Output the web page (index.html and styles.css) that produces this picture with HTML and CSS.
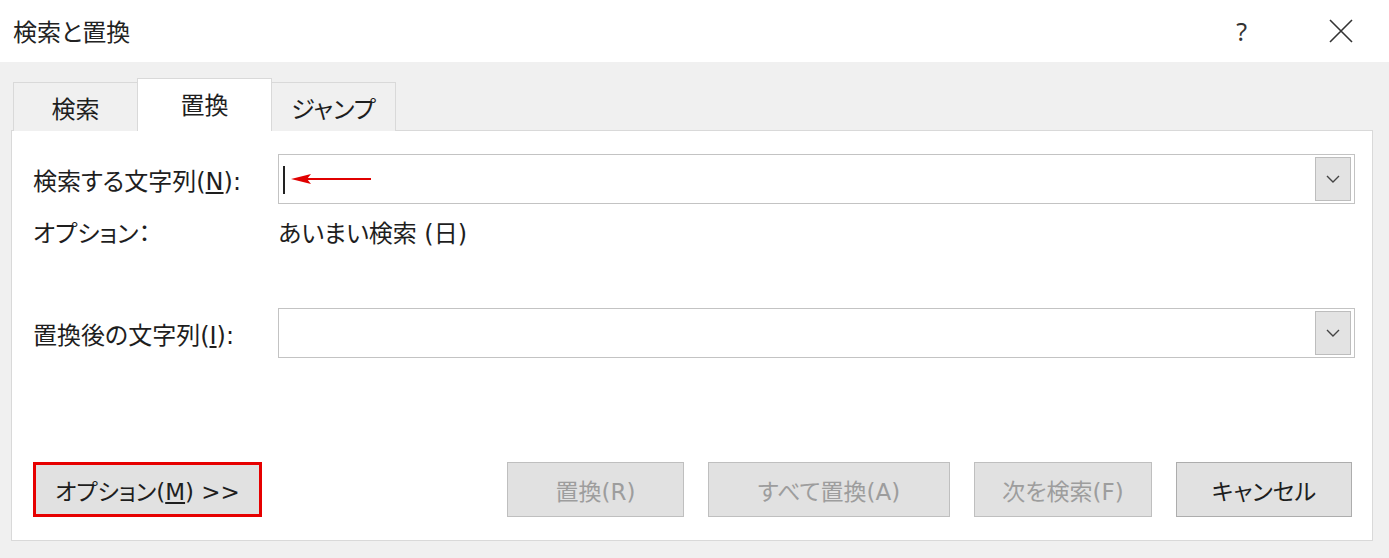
FILE: index.html
```html
<!DOCTYPE html>
<html lang="ja">
<head>
    <meta charset="UTF-8">
    <title>検索と置換</title>
    <link rel="stylesheet" href="styles.css">
</head>
<body>
    <div class="dialog">
        <div class="title-bar">
            <span class="title">検索と置換</span>
            <div class="title-buttons">
                <span class="help">?</span>
                <svg class="close" width="24" height="24" viewBox="0 0 24 24">
                    <path d="M1 1 L23 23 M23 1 L1 23" stroke="#333" stroke-width="1.6" fill="none"/>
                </svg>
            </div>
        </div>

        <div class="body">
            <div class="tabs">
                <div class="tab">検索</div>
                <div class="tab active">置換</div>
                <div class="tab">ジャンプ</div>
            </div>

            <div class="panel">
                <div class="field-row">
                    <label class="field-label">検索する文字列(<u>N</u>):</label>
                    <div class="combo">
                        <div class="combo-text">
                            <span class="caret"></span>
                            <svg class="arrow" width="80" height="12" viewBox="0 0 80 12">
                                <path d="M80 6 L14 6" stroke="#e00000" stroke-width="2"/>
                                <path d="M0 6 L20 1 L16 6 L20 11 Z" fill="#e00000"/>
                            </svg>
                        </div>
                        <div class="combo-btn">
                            <svg width="14" height="8" viewBox="0 0 14 8"><path d="M1 1 L7 7 L13 1" stroke="#444" stroke-width="1.4" fill="none"/></svg>
                        </div>
                    </div>
                </div>

                <div class="option-row">
                    <span class="field-label">オプション：</span>
                    <span>あいまい検索 (日)</span>
                </div>

                <div class="field-row replace-row">
                    <label class="field-label">置換後の文字列(<u>I</u>):</label>
                    <div class="combo">
                        <div class="combo-text"></div>
                        <div class="combo-btn">
                            <svg width="14" height="8" viewBox="0 0 14 8"><path d="M1 1 L7 7 L13 1" stroke="#444" stroke-width="1.4" fill="none"/></svg>
                        </div>
                    </div>
                </div>

                <div class="button-row">
                    <button class="btn btn-options">オプション(<u>M</u>) &gt;&gt;</button>
                    <div class="actions">
                        <button class="btn disabled w-replace">置換(R)</button>
                        <button class="btn disabled w-all">すべて置換(A)</button>
                        <button class="btn disabled w-next">次を検索(F)</button>
                        <button class="btn w-cancel">キャンセル</button>
                    </div>
                </div>
            </div>
        </div>
    </div>
</body>
</html>
```

FILE: styles.css
```css
body {
    margin: 0;
    background: #f0f0f0;
    font-family: "DejaVu Sans", "Noto Sans CJK JP", sans-serif;
    font-size: 24px;
    font-feature-settings: "palt";
    color: #1e1e1e;
}
.dialog {
    width: 1389px;
    height: 558px;
    background: #f0f0f0;
}
.title-bar {
    height: 62px;
    background: #fff;
    display: flex;
    align-items: center;
    justify-content: space-between;
    padding: 0 36px 0 13px;
    box-sizing: border-box;
}
.title {
    color: #222;
    margin-top: -2px;
}
.title-buttons {
    display: flex;
    align-items: center;
    gap: 82px;
}
.help {
    font-family: "Noto Sans", sans-serif;
    font-size: 25px;
    color: #333;
}
.close {
    display: block;
}
.body {
    padding: 17px 16px 0 11px;
}
.tabs {
    display: flex;
    align-items: flex-end;
    padding-left: 2px;
    height: 52px;
    margin-bottom: -1px;
    position: relative;
    z-index: 1;
}
.tab {
    height: 49px;
    box-sizing: border-box;
    border: 1px solid #d9d9d9;
    border-bottom: none;
    display: flex;
    align-items: center;
    justify-content: center;
    width: 125px;
    background: #f0f0f0;
}
.tab + .tab {
    margin-left: -1px;
}
.tab.active {
    height: 53px;
    width: 135px;
    background: #fff;
    padding-bottom: 3px;
}
.panel {
    background: #fff;
    border: 1px solid #d9d9d9;
    height: 411px;
    box-sizing: border-box;
    padding: 23px 17px 0 21px;
}
.field-row {
    display: flex;
    align-items: center;
    height: 50px;
}
.field-label {
    width: 245px;
    flex-shrink: 0;
}
.combo {
    flex: 1;
    height: 50px;
    box-sizing: border-box;
    border: 1px solid #c3c3c3;
    display: flex;
    align-items: center;
    padding-right: 3px;
}
.combo-text {
    flex: 1;
    display: flex;
    align-items: center;
    padding-left: 4px;
}
.caret {
    width: 2px;
    height: 28px;
    background: #222;
    margin-top: 2px;
}
.arrow {
    margin-left: 6px;
}
.combo-btn {
    width: 36px;
    height: 44px;
    box-sizing: border-box;
    background: #e3e3e3;
    border: 1px solid #bdbdbd;
    display: flex;
    align-items: center;
    justify-content: center;
}
.option-row {
    display: flex;
    height: 30px;
    line-height: 30px;
    margin-top: 15px;
}
.replace-row {
    margin-top: 59px;
}
.button-row {
    display: flex;
    justify-content: space-between;
    margin-top: 104px;
    padding-right: 3px;
}
.actions {
    display: flex;
    gap: 24px;
}
.btn {
    height: 55px;
    box-sizing: border-box;
    background: #e1e1e1;
    border: 1px solid #adadad;
    font-family: inherit;
    font-size: 23px;
    font-feature-settings: "palt";
    color: #1e1e1e;
    padding: 0;
}
.btn.disabled {
    color: #9d9d9d;
    border-color: #bfbfbf;
}
.btn-options {
    width: 229px;
    border: 3px solid #e60000;
}
.w-replace { width: 177px; }
.w-all { width: 242px; }
.w-next { width: 178px; }
.w-cancel { width: 176px; }
```
